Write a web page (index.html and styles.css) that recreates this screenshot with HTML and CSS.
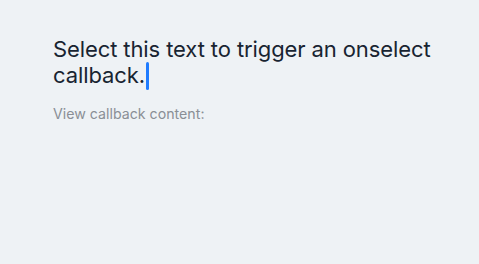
FILE: index.html
```html
<!DOCTYPE html>
<html>
<head>
<meta charset="utf-8">
<link rel="stylesheet" href="styles.css">
</head>
<body>
<main class="page">
  <p class="select-text">Select this text to trigger an onselect callback.<span class="caret"></span></p>
  <p class="callback-label">View callback content:</p>
</main>
</body>
</html>
```
FILE: styles.css
```css
html, body {
  margin: 0;
  padding: 0;
  background: #eef2f5;
}
.page {
  width: 479px;
  height: 264px;
  box-sizing: border-box;
  padding: 37px 30px 0 53px;
  font-family: Inter, Roboto, "Noto Sans", sans-serif;
}
.select-text {
  margin: 0;
  font-size: 22px;
  line-height: 25px;
  letter-spacing: -0.1px;
  color: #182431;
}
.caret {
  display: inline-block;
  width: 2.5px;
  height: 28px;
  margin-left: 1.5px;
  vertical-align: -7.5px;
  background: #1f7cff;
  border-radius: 1.5px;
}
.callback-label {
  margin: 15px 0 0;
  font-size: 14.2px;
  line-height: 18px;
  color: #8a8f96;
}
```
